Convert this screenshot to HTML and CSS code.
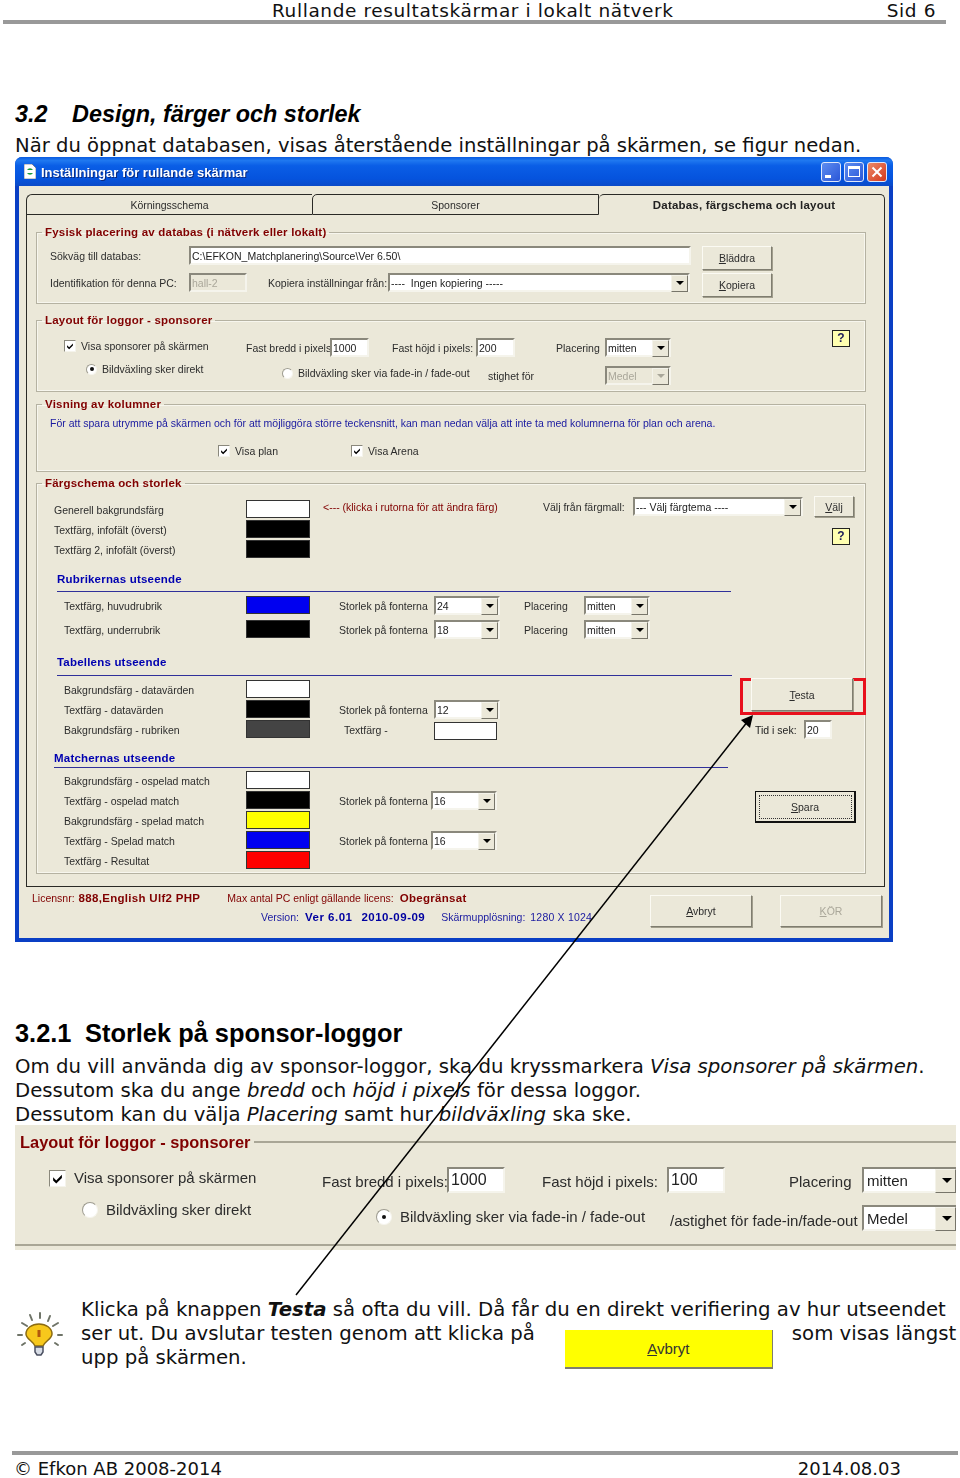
FILE: index.html
```html
<!DOCTYPE html>
<html lang="sv">

<head>
    <meta charset="UTF-8">
    <title>Rullande resultatskärmar i lokalt nätverk</title>
    <link rel="stylesheet" href="styles.css">
</head>

<body>
    <div class="page">
        <div class="page-head">
            <span class="head-title">Rullande resultatskärmar i lokalt nätverk</span>
            <span class="head-page">Sid 6</span>
        </div>

        <h2><span class="h2-num">3.2</span>Design, färger och storlek</h2>
        <p class="text">När du öppnat databasen, visas återstående inställningar på skärmen, se figur nedan.</p>

        <div class="dialog">
            <div class="titlebar">
                <svg class="app-icon" width="12" height="15" viewBox="0 0 12 15">
                    <path d="M0 0h8l4 4v11H0z" fill="#fff" stroke="#556" stroke-width=".6" />
                    <path d="M3 6a3.5 3.5 0 0 1 6 0l-2 0zM9 9a3.5 3.5 0 0 1-6 0h2z" fill="#1c9a3c" />
                </svg>
                <span class="title-text">Inställningar för rullande skärmar</span>
                <div class="win-btns">
                    <span class="win-btn"><i class="win-min"></i></span>
                    <span class="win-btn"><i class="win-max"></i></span>
                    <span class="win-btn win-close">
                        <svg width="12" height="12" viewBox="0 0 12 12">
                            <path d="M1.5 1.5l9 9M10.5 1.5l-9 9" stroke="#fff" stroke-width="2" />
                        </svg>
                    </span>
                </div>
            </div>

            <div class="client">
                <div class="tabs">
                    <div class="tab tab-1">Körningsschema</div>
                    <div class="tab tab-2">Sponsorer</div>
                    <div class="tab tab-active">Databas, färgschema och layout</div>
                </div>

                <div class="panel">
                    <fieldset class="group group-db">
                        <legend>Fysisk placering av databas (i nätverk eller lokalt)</legend>
                        <div class="db-row-a">
                            <span class="lbl">Sökväg till databas:</span>
                            <span class="field">C:\EFKON_Matchplanering\Source\Ver 6.50\</span>
                            <span></span>
                            <span class="btn btn-db"><span><u>B</u>läddra</span></span>
                        </div>
                        <div class="db-row-b">
                            <span class="lbl">Identifikation för denna PC:</span>
                            <span class="field field-off">hall-2</span>
                            <span></span>
                            <span class="lbl">Kopiera inställningar från:</span>
                            <span class="select">---- &nbsp;Ingen kopiering -----</span>
                            <span></span>
                            <span class="btn btn-db btn-up"><span><u>K</u>opiera</span></span>
                        </div>
                    </fieldset>

                    <fieldset class="group group-logo">
                        <legend>Layout för loggor - sponsorer</legend>
                        <div class="logo-row-a">
                            <label class="check">
                                <span class="cb"><svg viewBox="0 0 12 12"><path d="M2.5 5l2.5 2.5L9.5 3v2.5L5 10 2.5 7.5z" /></svg></span>
                                Visa sponsorer på skärmen
                            </label>
                            <span class="lbl">Fast bredd i pixels</span>
                            <span class="field field-num">1000</span>
                            <span class="lbl">Fast höjd i pixels:</span>
                            <span class="field field-num">200</span>
                            <span class="lbl">Placering</span>
                            <span class="select">mitten</span>
                            <span class="help help-logo">?</span>
                        </div>
                        <div class="logo-row-b">
                            <label class="check check-top">
                                <span class="radio radio-on"></span>
                                Bildväxling sker direkt
                            </label>
                            <label class="check check-fade">
                                <span class="radio"></span>
                                Bildväxling sker via fade-in / fade-out
                            </label>
                            <span class="clip-label">stighet för</span>
                            <span class="select select-off">Medel</span>
                        </div>
                    </fieldset>

                    <fieldset class="group group-cols">
                        <legend>Visning av kolumner</legend>
                        <p class="cols-info">För att spara utrymme på skärmen och för att möjliggöra större teckensnitt, kan man nedan välja att inte ta med kolumnerna för plan och arena.</p>
                        <div class="cols-checks">
                            <label class="check">
                                <span class="cb"><svg viewBox="0 0 12 12"><path d="M2.5 5l2.5 2.5L9.5 3v2.5L5 10 2.5 7.5z" /></svg></span>
                                Visa plan
                            </label>
                            <label class="check">
                                <span class="cb"><svg viewBox="0 0 12 12"><path d="M2.5 5l2.5 2.5L9.5 3v2.5L5 10 2.5 7.5z" /></svg></span>
                                Visa Arena
                            </label>
                        </div>
                    </fieldset>

                    <fieldset class="group group-color">
                        <legend>Färgschema och storlek</legend>
                        <div class="general-row">
                            <span class="lbl">Generell bakgrundsfärg</span>
                            <span class="swatch white"></span>
                            <span></span>
                            <span class="hint">&lt;--- (klicka i rutorna för att ändra färg)</span>
                            <span class="hint-lbl">Välj från färgmall:</span>
                            <span class="select select-theme">--- Välj färgtema ----</span>
                            <span></span>
                            <span class="btn btn-theme"><span><u>V</u>älj</span></span>
                        </div>
                        <div class="general-row">
                            <span class="lbl">Textfärg, infofält (överst)</span>
                            <span class="swatch black"></span>
                            <span class="help help-color">?</span>
                        </div>
                        <div class="general-row">
                            <span class="lbl">Textfärg 2, infofält (överst)</span>
                            <span class="swatch black"></span>
                        </div>

                        <div class="split">
                            <div class="colors">
                                <h4 class="sub-head sub-rub">Rubrikernas utseende</h4>
                                <div class="color-row rub-row">
                                    <span class="lbl">Textfärg, huvudrubrik</span>
                                    <span class="swatch blue"></span>
                                    <span></span>
                                    <span class="lbl">Storlek på fonterna</span>
                                    <span class="select">24</span>
                                    <span></span>
                                    <span class="lbl">Placering</span>
                                    <span class="select">mitten</span>
                                </div>
                                <div class="color-row rub-row">
                                    <span class="lbl">Textfärg, underrubrik</span>
                                    <span class="swatch black"></span>
                                    <span></span>
                                    <span class="lbl">Storlek på fonterna</span>
                                    <span class="select">18</span>
                                    <span></span>
                                    <span class="lbl">Placering</span>
                                    <span class="select">mitten</span>
                                </div>

                                <h4 class="sub-head sub-tab">Tabellens utseende</h4>
                                <div class="color-row">
                                    <span class="lbl">Bakgrundsfärg - datavärden</span>
                                    <span class="swatch white"></span>
                                </div>
                                <div class="color-row">
                                    <span class="lbl">Textfärg - datavärden</span>
                                    <span class="swatch black"></span>
                                    <span></span>
                                    <span class="lbl">Storlek på fonterna</span>
                                    <span class="select">12</span>
                                </div>
                                <div class="color-row">
                                    <span class="lbl">Bakgrundsfärg - rubriken</span>
                                    <span class="swatch grey"></span>
                                    <span></span>
                                    <span class="clip-label clip-text">Textfärg -</span>
                                    <span class="swatch white swatch-thin"></span>
                                </div>

                                <h4 class="sub-head sub-match">Matchernas utseende</h4>
                                <div class="color-row match-row">
                                    <span class="lbl">Bakgrundsfärg - ospelad match</span>
                                    <span class="swatch white"></span>
                                </div>
                                <div class="color-row match-row">
                                    <span class="lbl">Textfärg - ospelad match</span>
                                    <span class="swatch black"></span>
                                    <span></span>
                                    <span class="lbl">Storlek på fonterna</span>
                                    <span class="select">16</span>
                                </div>
                                <div class="color-row match-row">
                                    <span class="lbl">Bakgrundsfärg - spelad match</span>
                                    <span class="swatch yellow"></span>
                                </div>
                                <div class="color-row match-row">
                                    <span class="lbl">Textfärg - Spelad match</span>
                                    <span class="swatch blue"></span>
                                    <span></span>
                                    <span class="lbl">Storlek på fonterna</span>
                                    <span class="select">16</span>
                                </div>
                                <div class="color-row match-row">
                                    <span class="lbl">Textfärg - Resultat</span>
                                    <span class="swatch red"></span>
                                </div>
                            </div>

                            <div class="side">
                                <div class="red-box">
                                    <span class="btn btn-test"><span><u>T</u>esta</span></span>
                                </div>
                                <div class="time-row">
                                    <span class="lbl time-lbl">Tid i sek:</span>
                                    <span class="field field-time">20</span>
                                </div>
                                <div class="btn-save"><span><u>S</u>para</span></div>
                            </div>
                        </div>
                    </fieldset>
                </div>

                <div class="status">
                    <div class="status-info">
                        <div class="lic-line">
                            <span class="dark-red">Licensnr:</span>
                            <b class="dark-red lic-no">888,English Ulf2 PHP</b>
                            <span class="dark-red lic-max">Max antal PC enligt gällande licens:</span>
                            <b class="dark-red lic-val">Obegränsat</b>
                        </div>
                        <div class="ver-line">
                            <span>Version:</span>
                            <b class="ver-no">Ver 6.01</b>
                            <b class="ver-date">2010-09-09</b>
                            <span class="ver-res">Skärmupplösning:</span>
                            <span class="ver-size">1280 X 1024</span>
                        </div>
                    </div>
                    <span class="btn btn-foot"><span><u>A</u>vbryt</span></span>
                    <span class="btn btn-foot btn-off"><span><u>K</u>ÖR</span></span>
                </div>
            </div>
        </div>

        <h3><span class="h3-num">3.2.1</span>Storlek på sponsor-loggor</h3>
        <p class="text text-wide">Om du vill använda dig av sponsor-loggor, ska du kryssmarkera <em>Visa sponsorer på skärmen</em>.</p>
        <p class="text text-wide">Dessutom ska du ange <em>bredd</em> och <em>höjd i pixels</em> för dessa loggor.</p>
        <p class="text text-wide">Dessutom kan du välja <em>Placering</em> samt hur <em>bildväxling</em> ska ske.</p>

        <div class="crop">
            <div class="crop-title"><b>Layout för loggor - sponsorer</b><i></i></div>
            <div class="crop-row-a">
                <label class="check check-big">
                    <span class="cb"><svg viewBox="0 0 12 12"><path d="M2.5 5l2.5 2.5L9.5 3v2.5L5 10 2.5 7.5z" /></svg></span>
                    Visa sponsorer på skärmen
                </label>
                <span class="crop-lbl">Fast bredd i pixels:</span>
                <span class="field field-big">1000</span>
                <span class="crop-lbl">Fast höjd i pixels:</span>
                <span class="field field-big">100</span>
                <span class="crop-lbl">Placering</span>
                <span class="select select-big">mitten</span>
            </div>
            <div class="crop-row-b">
                <label class="check check-big crop-direct">
                    <span class="radio"></span>
                    Bildväxling sker direkt
                </label>
                <label class="check check-big crop-fade">
                    <span class="radio radio-on"></span>
                    Bildväxling sker via fade-in / fade-out
                </label>
                <span class="crop-lbl crop-speed">/astighet för fade-in/fade-out</span>
                <span class="select select-big crop-medel">Medel</span>
            </div>
        </div>

        <div class="tip">
            <svg class="bulb" width="50" height="50" viewBox="0 0 50 50">
                <g stroke="#6f7468" stroke-width="2" stroke-linecap="round">
                    <path d="M25 3v5M15 5l2 5M35 6l-2 5M7 13l5 3M43 13l-5 3M3 25h4M47 25h-4M7 35l3-2M43 35l-3-2" />
                </g>
                <path d="M11 24c0-6 6-10 13-10s13 4 13 10c0 5-7 7-9 12h-8c-2-5-9-7-9-12z" fill="#f7c81c" stroke="#8b6b12" stroke-width="1.5" />
                <path d="M24 20v7" stroke="#b2590c" stroke-width="3" />
                <path d="M20 37h8v5l-2 3h-4l-2-3z" fill="#d8dde6" stroke="#4a4f60" stroke-width="1.5" />
            </svg>
            <div class="tip-text">
                <div>Klicka på knappen <b><em>Testa</em></b> så ofta du vill. Då får du en direkt verifiering av hur utseendet</div>
                <div class="tip-line">
                    <span>ser ut. Du avslutar testen genom att klicka på</span>
                    <span class="btn-yellow"><span><u>A</u>vbryt</span></span>
                    <span>som visas längst</span>
                </div>
                <div>upp på skärmen.</div>
            </div>
        </div>

        <div class="page-foot">
            <span>© Efkon AB 2008-2014</span>
            <span class="foot-date">2014.08.03</span>
        </div>

        <!-- arrow from the tip text up to the Testa button -->
        <svg class="arrow" width="960" height="1478" viewBox="0 0 960 1478">
            <path d="M296 1295L748 721" stroke="#000" stroke-width="1.5" fill="none" />
            <path d="M753 715L741 720L750 728z" fill="#000" />
        </svg>
    </div>
</body>

</html>
```

FILE: styles.css
```css
* {
    box-sizing: border-box;
}

html,
body {
    margin: 0;
    padding: 0;
}

.page {
    position: relative;
    width: 960px;
    height: 1478px;
    overflow: hidden;
    background-color: #fff;
    color: #111;
    font-family: "DejaVu Sans", Verdana, sans-serif;
    font-size: 19.6px;
    line-height: 24px;
}

/* Document header */
.page-head {
    display: flex;
    height: 24px;
    margin: 0 14px 0 3px;
    padding-left: 269px;
    border-bottom: 4px solid #999;
    font-size: 18.5px;
    letter-spacing: .6px;
    line-height: 21.5px;
}

.head-page {
    margin-left: auto;
    padding-right: 10px;
}

h2,
h3 {
    margin: 0;
    padding-left: 15px;
    font-family: "Liberation Sans", Arial, sans-serif;
    color: #000;
}

h2 {
    margin: 74px 0 2px;
    font-size: 23.4px;
    font-style: italic;
    line-height: 33px;
}

.h2-num {
    display: inline-block;
    width: 57px;
}

h3 {
    margin: 73px 0 3px;
    font-size: 25.4px;
    line-height: 36px;
}

.h3-num {
    display: inline-block;
    width: 70px;
}

.text {
    height: 24px;
    margin: 0;
    padding-left: 15px;
    line-height: 26px;
    white-space: nowrap;
}

.text-wide {
    font-size: 19.72px;
}

/* Dialog window */
.dialog {
    width: 878px;
    height: 785px;
    margin-left: 15px;
    border-radius: 7px 7px 0 0;
    background-color: #0a3fc4;
    font-family: "Liberation Sans", Arial, sans-serif;
    font-size: 10.5px;
    line-height: 14px;
    color: #2c2c2c;
    filter: blur(.3px);
}

.titlebar {
    display: flex;
    align-items: center;
    height: 29px;
    padding: 0 6px 0 9px;
    border-radius: 7px 7px 0 0;
    background: linear-gradient(#0a5be0 0, #1f78f0 12%, #0a5ee6 30%, #0553dd 75%, #0a4ac8 100%);
}

.app-icon {
    flex: none;
}

.title-text {
    margin: 2px 0 0 5px;
    color: #fff;
    font-size: 13px;
    font-weight: bold;
    text-shadow: 1px 1px 0 #0a2a80;
}

.win-btns {
    display: flex;
    gap: 3px;
    margin-left: auto;
}

.win-btn {
    display: flex;
    align-items: center;
    justify-content: center;
    width: 20px;
    height: 20px;
    border: 1px solid #dfe8fb;
    border-radius: 3px;
    background: linear-gradient(135deg, #5d8df0, #2a56d8);
}

.win-close {
    background: linear-gradient(135deg, #eb8a68, #d5391c);
}

.win-min {
    width: 6px;
    height: 3px;
    margin: 9px 6px 0 0;
    background-color: #fff;
}

.win-max {
    width: 12px;
    height: 11px;
    border: 1px solid #fff;
    border-top-width: 3px;
}

.client {
    width: 870px;
    height: 752px;
    margin-left: 4px;
    padding: 8px 4px 0 7px;
    background-color: #ebe8d9;
}

.tabs {
    display: grid;
    grid-template-columns: 286px 287px 286px;
    height: 21px;
}

.tab {
    padding-top: 3px;
    border: 1px solid #2a2a26;
    border-right: 0;
    border-radius: 6px 0 0 0;
    text-align: center;
}

.tab-2 {
    border-right: 1px solid #2a2a26;
    border-radius: 5px 0 0 0;
}

.tab-active {
    padding-left: 5px;
    border-top: 1px solid #2a2a26;
    border-right: 1px solid #2a2a26;
    border-bottom: 0;
    border-left: 0;
    border-radius: 5px 5px 0 0;
    font-size: 11.5px;
    font-weight: bold;
    letter-spacing: .2px;
    color: #222;
}

.panel {
    height: 672px;
    padding: 10px 18px 0 9px;
    border: 1px solid #2a2a26;
    border-top: 0;
}

/* Group boxes */
.group {
    min-width: 0;
    margin: 0;
    padding: 0;
    border: 1px solid #b5b2a2;
    box-shadow: inset 0 0 0 1px #f7f6ee;
}

.group legend {
    height: 14px;
    margin-left: 5px;
    padding: 0 3px;
    font-size: 11.5px;
    font-weight: bold;
    letter-spacing: .2px;
    color: #800000;
}

.group-db {
    height: 79px;
    padding-top: 7px;
}

.group-logo {
    height: 79px;
    margin-top: 9px;
    padding-top: 11px;
}

.group-cols {
    height: 75px;
    margin-top: 5px;
    padding-top: 5px;
}

.group-color {
    height: 398px;
    margin-top: 4px;
    padding-top: 10px;
}

.db-row-a,
.db-row-b {
    display: grid;
    align-items: start;
    padding-left: 13px;
}

.db-row-a {
    grid-template-columns: 139px 502px 11px 70px;
    height: 24px;
}

.db-row-b {
    grid-template-columns: 139px 58px 21px 120px 302px 12px 70px;
    margin-top: 3px;
    height: 25px;
}

.lbl {
    line-height: 21px;
    white-space: nowrap;
}

/* Controls */
.field,
.select {
    display: block;
    position: relative;
    height: 19px;
    padding: 1px 0 0 1px;
    border: 2px solid;
    border-color: #8a887c #f5f4ec #f5f4ec #8a887c;
    background-color: #fff;
    color: #222;
    white-space: nowrap;
}

.field-off {
    background-color: #ebe8d9;
    color: #aaa79a;
}

.select::after {
    content: "";
    position: absolute;
    top: 0;
    right: 0;
    width: 15px;
    height: 15px;
    border: 1px solid;
    border-color: #f4f3ea #77756a #77756a #f4f3ea;
    background-color: #ebe8d9;
}

.select::before {
    content: "";
    position: absolute;
    z-index: 1;
    top: 6px;
    right: 4px;
    border-top: 4px solid #000;
    border-right: 4px solid transparent;
    border-left: 4px solid transparent;
}

.select-off {
    background-color: #ebe8d9;
    color: #aaa79a;
}

.select-off::before {
    border-top-color: #aaa79a;
}

.btn {
    display: flex;
    align-items: center;
    justify-content: center;
    border: 1px solid;
    border-color: #fbfaf3 #7f7d70 #7f7d70 #fbfaf3;
    box-shadow: 1px 1px 0 #a19e8d;
    background-color: #ebe8d9;
    white-space: nowrap;
}

.btn-db {
    width: 70px;
    height: 24px;
}

.btn-theme {
    width: 40px;
    height: 21px;
    margin-top: -4px;
}

.btn-test {
    width: 102px;
    height: 33px;
    margin: -3px 0 0 8px;
}

.btn-foot {
    width: 102px;
    height: 32px;
}

.btn-off {
    margin-left: 28px;
    color: #aaa79a;
}

.help {
    display: block;
    width: 18px;
    height: 17px;
    border: 1px solid #222;
    background-color: #ffffb0;
    color: #20205a;
    font-size: 12px;
    font-weight: bold;
    line-height: 14px;
    text-align: center;
}

.help-logo {
    margin-top: -8px;
}

.help-color {
    grid-column: 8;
    margin: 8px 0 0 18px;
}

.check {
    display: flex;
    align-items: center;
    gap: 5px;
    height: 14px;
    margin-top: 1px;
    white-space: nowrap;
}

.cb {
    display: block;
    flex: none;
    width: 12px;
    height: 12px;
    border: 1px solid;
    border-color: #8a887c #f5f4ec #f5f4ec #8a887c;
    background-color: #fff;
}

.cb svg {
    display: block;
    width: 100%;
    height: 100%;
}

.radio {
    display: flex;
    align-items: center;
    justify-content: center;
    flex: none;
    width: 11px;
    height: 11px;
    border: 1px solid #9e9c90;
    border-right-color: #f6f5ee;
    border-bottom-color: #f6f5ee;
    border-radius: 50%;
    background-color: #fff;
}

.radio-on::after {
    content: "";
    width: 4px;
    height: 4px;
    border-radius: 50%;
    background-color: #111;
}

/* Sponsor layout group */
.logo-row-a,
.logo-row-b {
    display: grid;
    align-items: start;
    padding-left: 27px;
}

.logo-row-a {
    grid-template-columns: 182px 84px 62px 84px 80px 49px 66px 161px 18px;
    height: 19px;
}

.logo-row-a .field-num {
    width: 39px;
}

.logo-row-a .help {
    grid-column: 9;
}

.logo-row-b {
    grid-template-columns: 196px 206px 117px 66px;
    margin-top: 5px;
    padding-left: 49px;
}

.check-top {
    margin-top: 0;
}

.check-fade {
    margin-top: 4px;
}

.logo-row-b .select {
    margin-top: 4px;
}

.clip-label {
    display: block;
    height: 14px;
    margin-top: 7px;
    white-space: nowrap;
}

.clip-text {
    margin: 3px 0 0 5px;
}

/* Columns group */
.cols-info {
    margin: 0 0 14px;
    padding-left: 13px;
    color: #1a1aa0;
    white-space: nowrap;
}

.cols-checks {
    display: grid;
    grid-template-columns: 133px auto;
    padding-left: 181px;
}

.cols-checks .check {
    margin-top: 0;
}

/* Colour group */
.general-row {
    display: grid;
    grid-template-columns: 192px 64px 13px 220px 90px 170px 11px 40px;
    align-items: start;
    height: 20px;
    padding-left: 17px;
}

.swatch {
    display: block;
    height: 18px;
    border: 1px solid #333;
}

.white {
    background-color: #fff;
}

.black {
    background-color: #000;
}

.blue {
    background-color: #0000f0;
}

.grey {
    background-color: #444;
}

.yellow {
    background-color: #ff0;
}

.red {
    background-color: #f00;
}

.hint {
    color: #800000;
    white-space: nowrap;
}

.hint-lbl {
    white-space: nowrap;
}

.select-theme {
    margin-top: -3px;
}

.split {
    display: flex;
}

.colors {
    width: 703px;
    flex: none;
}

.sub-head {
    margin: 0;
    border-bottom: 1px solid #30309a;
    font-size: 11.5px;
    font-weight: bold;
    letter-spacing: .2px;
    line-height: 14px;
    color: #0000b0;
}

.sub-rub {
    width: 674px;
    height: 20px;
    margin: 12px 0 4px 20px;
}

.sub-tab {
    width: 675px;
    height: 21px;
    margin: 15px 0 4px 20px;
}

.sub-match {
    width: 674px;
    height: 17px;
    margin: 11px 0 3px 17px;
}

.color-row {
    display: grid;
    grid-template-columns: 182px 64px 29px 95px 66px 24px 60px 66px;
    align-items: start;
    height: 20px;
    padding-left: 27px;
}

.rub-row {
    margin-bottom: 4px;
}

.match-row {
    grid-template-columns: 182px 64px 29px 92px 66px;
}

.swatch-thin {
    height: 18px;
    margin-top: 2px;
    width: 63px;
}

.side {
    width: 126px;
    flex: none;
    padding-top: 118px;
}

.red-box {
    width: 126px;
    height: 37px;
    border: 3px solid #e8101c;
}

.time-row {
    display: flex;
    margin-top: 5px;
    padding-left: 15px;
}

.time-lbl {
    width: 49px;
    color: #222;
    line-height: 21px;
}

.field-time {
    width: 28px;
}

.btn-save {
    display: flex;
    align-items: center;
    justify-content: center;
    width: 101px;
    height: 32px;
    margin: 50px 0 0 15px;
    border: 1px solid #111;
    border-right-width: 2px;
    border-bottom-width: 2px;
    outline: 1px dotted #333;
    outline-offset: -5px;
}

/* Status area below the tabs */
.status {
    display: flex;
    align-items: flex-start;
    padding-top: 8px;
}

.status-info {
    width: 624px;
    margin-top: -4px;
    padding-left: 6px;
    white-space: nowrap;
}

.lic-line {
    display: flex;
    height: 19px;
}

.dark-red {
    color: #800000;
}

.lic-no,
.lic-val {
    font-size: 11.5px;
    letter-spacing: .3px;
}

.ver-no,
.ver-date {
    font-size: 11.5px;
    letter-spacing: .5px;
}

.lic-no {
    margin-left: 4px;
}

.lic-max {
    margin-left: 27px;
}

.lic-val {
    margin-left: 6px;
}

.ver-line {
    display: flex;
    padding-left: 229px;
    color: #1a1aa0;
}

.ver-no {
    margin-left: 6px;
    color: #0000a0;
}

.ver-date {
    margin-left: 9px;
    color: #0000a0;
}

.ver-res {
    margin-left: 16px;
}

.ver-size {
    margin-left: 5px;
    letter-spacing: .2px;
}

/* Crop of the sponsor group */
.crop {
    width: 941px;
    height: 125px;
    margin: -1px 0 0 15px;
    padding-top: 9px;
    background-color: #ebe8d9;
    font-family: "Liberation Sans", Arial, sans-serif;
    font-size: 15px;
    line-height: 16px;
    color: #2c2c2c;
    white-space: nowrap;
    filter: blur(.3px);
}

.crop-title {
    display: flex;
    height: 16px;
    padding-left: 5px;
}

.crop-title b {
    font-size: 16.4px;
    color: #800000;
}

.crop-title i {
    flex: 1;
    height: 2px;
    margin: 7px 0 0 4px;
    background-color: #a9a696;
}

.crop-row-a,
.crop-row-b {
    display: grid;
    align-items: start;
}

.crop-row-a {
    grid-template-columns: 273px 125px 95px 125px 122px 73px 94px;
    height: 26px;
    margin-top: 17px;
    padding-left: 34px;
}

.crop-row-b {
    grid-template-columns: 294px 294px 192px 94px;
    height: 53px;
    padding: 10px 0 0 67px;
    border-bottom: 2px solid #a9a696;
}

.check-big {
    gap: 8px;
    height: 18px;
    margin-top: 2px;
}

.check-big .cb {
    width: 17px;
    height: 17px;
}

.check-big .radio {
    width: 16px;
    height: 16px;
}

.crop-lbl {
    padding-top: 7px;
}

.field-big {
    width: 58px;
    height: 26px;
    padding: 2px 0 0 2px;
    font-size: 16px;
    line-height: 18px;
}

.select-big {
    height: 26px;
    padding: 4px 0 0 3px;
    border-right: 0;
}

.select-big::after {
    top: 0;
    width: 19px;
    height: 22px;
}

.select-big::before {
    top: 9px;
    right: 4px;
    border-top-width: 5px;
    border-right-width: 5px;
    border-left-width: 5px;
}

.crop-direct {
    margin-top: -2px;
}

.crop-fade {
    margin-top: 5px;
}

.crop-speed {
    padding-top: 10px;
}

.crop-medel {
    margin-top: 2px;
}

/* Tip with the yellow button */
.tip {
    display: flex;
    margin-top: 48px;
    padding-left: 15px;
}

.bulb {
    flex: none;
    width: 50px;
    height: 50px;
    margin: 12px 16px 0 0;
}

.tip-text {
    font-size: 19.72px;
    white-space: nowrap;
}

.tip-line {
    display: flex;
}

.btn-yellow {
    display: flex;
    align-items: center;
    justify-content: center;
    width: 208px;
    height: 39px;
    margin: 8px 19px -23px 30px;
    border-right: 1px solid #7f7d70;
    border-bottom: 2px solid #7f7d70;
    background-color: #ff0;
    color: #333;
    font-family: "Liberation Sans", Arial, sans-serif;
    font-size: 15px;
}

/* Document footer */
.page-foot {
    position: relative;
    display: flex;
    height: 27px;
    margin: 81px 2px 0 12px;
    padding-left: 2px;
    border-top: 4px solid #999;
    font-size: 18px;
    line-height: 28px;
}

.foot-date {
    margin-left: 576px;
}

/* Annotation arrow over the page */
.arrow {
    position: absolute;
    top: 0;
    left: 0;
    pointer-events: none;
}
```
